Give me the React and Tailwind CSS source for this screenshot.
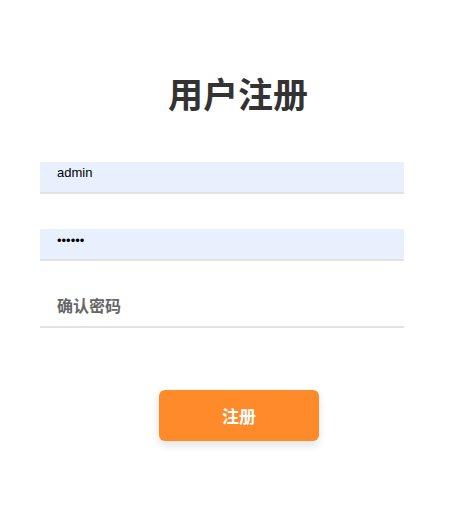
export default function App() {
  return (
    <div className="min-h-[509px] w-[460px] bg-white font-['Liberation_Sans','Noto_Sans_CJK_SC',sans-serif]">
      <div className="flex flex-col pt-[69px]">
        <h1 className="pl-[16px] text-center text-[35px] leading-[48px] font-bold text-[#333] font-['Noto_Sans_CJK_SC',sans-serif]">
          用户注册
        </h1>
        <form className="mt-[45px] flex flex-col gap-[35px] pl-[40px]">
          <input
            type="text"
            defaultValue="admin"
            className="h-[32px] w-[364px] border-b-2 border-[#e2e2e2] bg-[#e8f0fe] pb-[9px] pl-[17px] text-[13px] text-black outline-none"
          />
          <input
            type="password"
            defaultValue="123456"
            className="h-[32px] w-[364px] border-b-2 border-[#e2e2e2] bg-[#e8f0fe] pb-[8px] pl-[17px] text-[13px] text-black outline-none"
          />
          <input
            type="password"
            placeholder="确认密码"
            className="h-[32px] w-[364px] border-b-2 border-[#e2e2e2] bg-white pb-[8px] pl-[17px] text-[16px] font-bold text-black outline-none placeholder:text-[#666] placeholder:font-['Noto_Sans_CJK_SC',sans-serif]"
          />
          <div className="mt-[27px] pl-[119px]">
            <button
              type="button"
              className="h-[51px] w-[160px] rounded-[6px] bg-[#ff8a2a] text-[17px] font-bold text-white shadow-[0_4px_10px_rgba(0,0,0,0.12)] font-['Noto_Sans_CJK_SC',sans-serif]"
            >
              注册
            </button>
          </div>
        </form>
      </div>
    </div>
  )
}
